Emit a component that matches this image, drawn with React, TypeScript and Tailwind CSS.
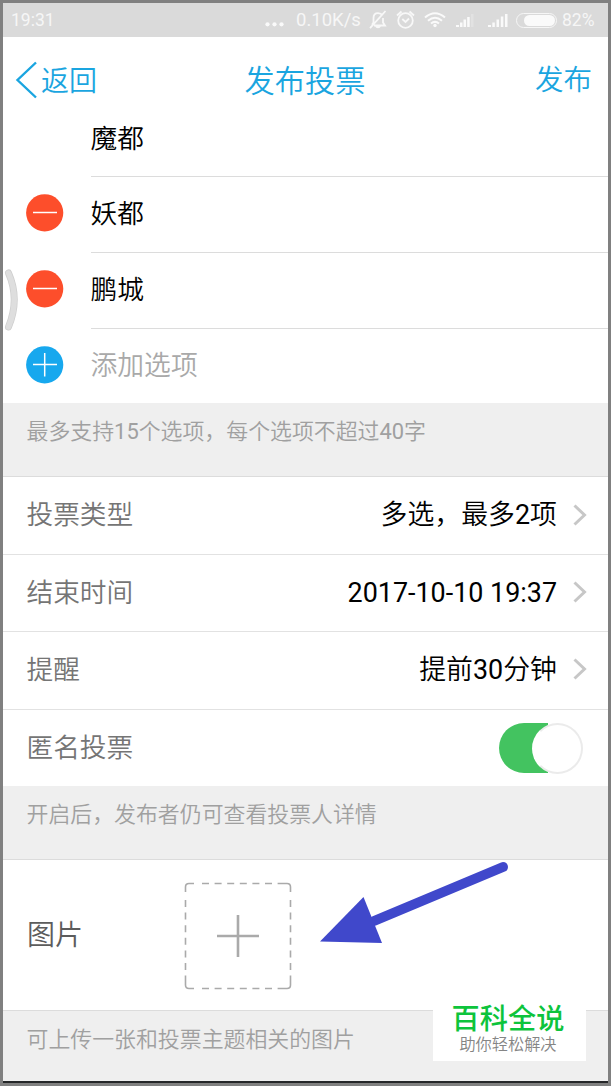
import type { ReactNode } from 'react';

function StatusBar() {
  return (
    <div className="flex h-[34px] shrink-0 items-center bg-[#dadada] pl-2 pr-[11px] text-[17.5px] font-normal text-[#f6f6f6]">
      <span>19:31</span>
      <svg className="ml-auto" width="19" height="20" viewBox="0 0 19 20" fill="#fafafa">
        <circle cx="2.5" cy="14.3" r="2.1" />
        <circle cx="9.5" cy="14.3" r="2.1" />
        <circle cx="16.5" cy="14.3" r="2.1" />
      </svg>
      <span className="ml-[12px] w-[66px] whitespace-nowrap text-[18.500px]">0.10K/s</span>
      <svg className="ml-[7px]" width="18" height="20" viewBox="0 0 18 20" fill="none" stroke="#f8f8f8" strokeWidth="1.8">
        <path d="M13.500 5.300C12.500 3.800 10.900 3.200 9 3.200C6.200 3.200 4.500 5 4.500 8V12.500L3 14.800M14 8V12.500L16 15.500H5M7 16.200C7.500 17.800 10.500 17.800 11 16.200M16.500 1L1 18.200" />
      </svg>
      <svg className="ml-[9px]" width="19" height="20" viewBox="0 0 19 20" fill="none" stroke="#f8f8f8" strokeWidth="1.8">
        <circle cx="9.500" cy="10.500" r="7.300" />
        <path d="M1 5.500L5.500 1.500M18 5.500L13.500 1.500M6.300 9L9.500 12L13 8.500" />
      </svg>
      <svg className="ml-[9px]" width="22" height="20" viewBox="0 0 22 20" fill="none" stroke="#fafafa" strokeWidth="2">
        <path d="M1 7.500Q11-1 21 7.500M4 10.700Q11 4.700 18 10.700M7 13.600Q11 10.200 15 13.600" />
        <circle cx="11" cy="15.500" r="1.700" fill="#fafafa" stroke="none" />
      </svg>
      <svg className="ml-[10px]" width="19" height="20" viewBox="0 0 19 20" fill="#fafafa">
        <path d="M0 15h3v2H0zM4 12.500h2.500V17H4zM7.500 9.500H10V17H7.500zM11.200 7h2.500v10h-2.500z" />
        <path d="M15 4h2.500v13H15z" fill="#e2e2e2" />
      </svg>
      <svg className="ml-[13px]" width="20" height="20" viewBox="0 0 20 20" fill="#fafafa">
        <path d="M0 15h3v2H0zM4.300 12.500h2.500V17H4.300zM8.500 9.500H11V17H8.500zM12.800 6.500h2.500V17h-2.500zM17 4h2.500v13H17z" />
      </svg>
      <div className="ml-[8px] flex h-[15px] w-[41px] items-center justify-end rounded-full border border-[#f6f6f6] pr-[1.5px]">
        <div className="h-[11px] w-[31px] rounded-full bg-[#fafafa]" />
      </div>
      <span className="ml-[5px] w-[35px] whitespace-nowrap">82%</span>
    </div>
  );
}

function Header() {
  return (
    <div className="grid h-[86px] shrink-0 grid-cols-3 items-center pl-3 pr-4 pt-px text-[28.5px] text-[#1aa5e0]">
      <div className="flex items-center">
        <svg className="-mt-0.5" width="22" height="38" viewBox="0 0 22 38" fill="none" stroke="#1aa5e0" strokeWidth="2.4">
          <path d="M21 1.500L2.500 19L21 36.500" />
        </svg>
        <span className="ml-1 pt-0.5 text-[28px]">返回</span>
      </div>
      <span className="pl-[3px] pt-[3px] text-center text-[30.2px]">发布投票</span>
      <span className="pt-px text-right">发布</span>
    </div>
  );
}

function RoundIcon({ plus = false }: { plus?: boolean }) {
  return (
    <svg className="shrink-0" width="38" height="38" viewBox="0 0 38 38" stroke="#fff" strokeWidth="1.5">
      <circle cx="18.700" cy="18.800" r="18.600" fill={plus ? '#17a8ee' : '#fd4e2b'} stroke="none" />
      <path d={plus ? 'M7 18.500H31M18.700 7V30.500' : 'M7 18.500H31'} />
    </svg>
  );
}

function Option({ text, last = false, plus = false }: { text: string; last?: boolean; plus?: boolean }) {
  return (
    <div className={last ? 'flex h-[74px] shrink-0 pl-[23px]' : 'flex h-[76px] shrink-0 pl-[23px]'}>
      <div className="mt-[17px] w-[64.500px] shrink-0">
        <RoundIcon plus={plus} />
      </div>
      <div
        className={
          last
            ? 'flex flex-1 items-center pb-px text-[26.800px] text-[#a9a9a9]'
            : 'flex flex-1 items-center border-b border-[#dcdcdc] pb-px'
        }
      >
        {text}
      </div>
    </div>
  );
}

function Num({ children }: { children: ReactNode }) {
  return <span className="font-normal">{children}</span>;
}

function Hint({ children, className }: { children: ReactNode; className: string }) {
  return <div className={`shrink-0 bg-[#efefef] pl-[23.500px] text-[21.900px] leading-[30px] text-[#a0a0a0] ${className}`}>{children}</div>;
}

function Setting({ label, children, className }: { label: string; children: ReactNode; className: string }) {
  return (
    <div className={`flex shrink-0 items-center justify-between pl-[23.500px] ${className}`}>
      <span className="text-[#757575]">{label}</span>
      {children}
    </div>
  );
}

function Value({ children }: { children: ReactNode }) {
  return (
    <div className="flex items-center pr-[21px]">
      <span className="text-[26.900px]">{children}</span>
      <svg className="-mt-px ml-4" width="14" height="22" viewBox="0 0 14 22" fill="none" stroke="#c7c7c7" strokeWidth="3">
        <path d="M1.500 1.500L11.500 11L1.500 20.500" />
      </svg>
    </div>
  );
}

export default function App() {
  return (
    <div className="relative flex h-[1086px] w-[611px] flex-col border-[3px] border-[#808080] bg-white font-[Roboto,'Noto_Sans_CJK_SC',sans-serif] text-[26.700px] leading-[38px] font-[350] text-black">
      <StatusBar />
      <Header />
      <div className="flex h-[54px] shrink-0 pl-[87.500px]">
        <div className="flex flex-1 items-start border-b border-[#dcdcdc]">
          <span className="-mt-[3px]">魔都</span>
        </div>
      </div>
      <Option text="妖都" />
      <Option text="鹏城" />
      <Option text="添加选项" last plus />
      <Hint className="h-[74px] border-b border-[#dcdcdc] pt-[14px]">
        最多支持<Num>15</Num>个选项，每个选项不超过<Num>40</Num>字
      </Hint>
      <Setting className="h-[78px] border-b border-[#e2e2e2] pb-px" label="投票类型">
        <Value>
          多选，最多<Num>2</Num>项
        </Value>
      </Setting>
      <Setting className="h-[77px] border-b border-[#e2e2e2] pb-px" label="结束时间">
        <Value>
          <Num>2017-10-10 19:37</Num>
        </Value>
      </Setting>
      <Setting className="h-[78px] border-b border-[#e2e2e2] pb-0.5" label="提醒">
        <Value>
          提前<Num>30</Num>分钟
        </Value>
      </Setting>
      <Setting className="h-[76px]" label="匿名投票">
        <div className="mr-[25px] flex h-[50px] w-[84px] items-center justify-end rounded-full bg-[linear-gradient(90deg,#43c360_58%,#ffffff_58%)]">
          <div className="size-[51px] shrink-0 rounded-full border-2 border-[#ebebeb] border-l-white bg-white" />
        </div>
      </Setting>
      <Hint className="h-[74px] border-b border-[#dcdcdc] pt-[14px]">开启后，发布者仍可查看投票人详情</Hint>
      <div className="flex h-[151px] shrink-0 items-center border-b border-[#dcdcdc] pl-6">
        <span className="w-[157px] pt-px text-[28px] text-[#5c5c5c]">图片</span>
        <svg className="mt-0.5" width="108" height="108" viewBox="0 0 108 108" fill="none" stroke="#aaa" strokeWidth="1.6">
          <path d="M1.500 10V5Q1.500 1.500 5 1.500H10M98 1.500H103Q106.500 1.500 106.500 5V10M106.500 98V103Q106.500 106.500 103 106.500H98M10 106.500H5Q1.500 106.500 1.500 103V98" />
          <path d="M18 1.500H98M18 106.500H98M1.500 18V98M106.500 18V98" strokeDasharray="7 5.600" />
          <path d="M33 54H75M54 33V75" strokeWidth="2.600" />
        </svg>
      </div>
      <Hint className="h-[70px] pt-[14px]">可上传一张和投票主题相关的图片</Hint>
      <div className="h-[2px] shrink-0 bg-[#252729]" />
      <svg className="absolute left-px top-[265px]" width="14" height="64" viewBox="0 0 14 64" fill="none">
        <path d="M4.500 5Q16 31 4.500 59" stroke="#cecece" strokeWidth="7" strokeLinecap="round" />
        <path d="M4.500 5Q16 31 4.500 59" stroke="#dedede" strokeWidth="5.500" strokeLinecap="round" />
      </svg>
      <svg className="absolute left-[317px] top-[857px]" width="192" height="88" viewBox="0 0 192 88" fill="#4048cb">
        <path d="M54 61L183 7" stroke="#4048cb" strokeWidth="10" strokeLinecap="round" />
        <path d="M0 81.500L43.500 37L62 83z" />
      </svg>
      <div className="absolute left-[430px] top-[1000px] flex h-[58px] w-[153px] flex-col items-center bg-white pr-[3px]">
        <span className="whitespace-nowrap text-[28.200px] leading-[34px] font-medium text-[#0dc43c]">百科全说</span>
        <span className="-mt-px whitespace-nowrap text-[16.200px] leading-[18px] text-[#858585]">助你轻松解决</span>
      </div>
    </div>
  );
}
